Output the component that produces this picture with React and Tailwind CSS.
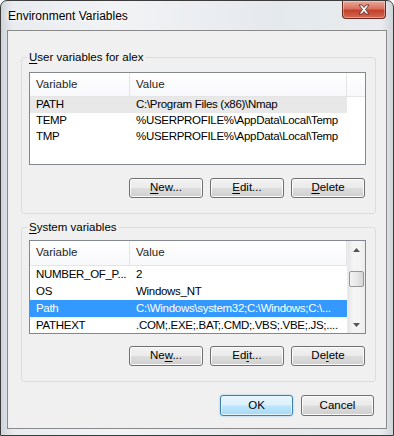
import React from 'react';

// Win7-style push button
const Btn = ({ children, className = '', h = 'h-[20px]', w = 'w-[74px]' }) => (
  <button
    className={`${h} ${w} rounded-[3px] border border-[#707070] bg-[linear-gradient(#f2f2f2_0%,#ebebeb_48%,#dddddd_52%,#cfcfcf_100%)] shadow-[inset_0_0_0_1px_#fbfbfb] text-black leading-none ${className}`}
  >
    {children}
  </button>
);

const U = ({ children }) => <span className="underline underline-offset-2">{children}</span>;

const Group = ({ label, children, className = '' }) => (
  <div className={`relative border border-[#d5dfe5] rounded-[3px] ${className}`}>
    <span className="absolute left-[5px] -top-[8px] bg-[#f0f0f0] px-[2px] leading-[15px]">{label}</span>
    {children}
  </div>
);

const Header = ({ h }) => (
  <div className={`flex ${h} bg-[linear-gradient(#ffffff,#f7f8fa)] border-b border-[#e5e5e5] text-[#1e1e1e]`}>
    <div className="w-[100px] border-r border-[#e5e5e5] pl-[6px] flex items-center">Variable</div>
    <div className="w-[217px] border-r border-[#e5e5e5] pl-[6px] flex items-center">Value</div>
  </div>
);

const Row = ({ name, value, h, sel }) => {
  const bg = sel === 'blue' ? 'bg-[#3399ff] text-white' : sel === 'gray' ? 'bg-[#e8e8e8]' : '';
  return (
    <div className={`flex w-[317px] ${h} items-center whitespace-nowrap tracking-[-0.3px] ${bg}`}>
      <div className="w-[100px] pl-[6px] overflow-hidden">{name}</div>
      <div className="w-[217px] pl-[6px] overflow-hidden">{value}</div>
    </div>
  );
};

const userVars = [
  ['PATH', 'C:\\Program Files (x86)\\Nmap', 'gray'],
  ['TEMP', '%USERPROFILE%\\AppData\\Local\\Temp'],
  ['TMP', '%USERPROFILE%\\AppData\\Local\\Temp'],
];

const sysVars = [
  ['NUMBER_OF_P...', '2'],
  ['OS', 'Windows_NT'],
  ['Path', 'C:\\Windows\\system32;C:\\Windows;C:\\...', 'blue'],
  ['PATHEXT', '.COM;.EXE;.BAT;.CMD;.VBS;.VBE;.JS;....'],
];

export default function App() {
  return (
    <div
      className="w-[394px] h-[436px] flex flex-col border border-[#3c3c3c] rounded-t-[7px] bg-[linear-gradient(90deg,#cfd4d9_0%,#e9ecef_3%,#f1f3f5_30%,#e6e9ec_70%,#e9ecef_97%,#cfd4d9_100%)] text-[11.5px] text-black"
      style={{ fontFamily: '"Liberation Sans", Arial, sans-serif' }}
    >
      {/* title bar */}
      <div className="h-[29px] flex items-start justify-between pl-[7px] pr-[7px] shrink-0">
        <span className="mt-[8px] text-[12px] leading-[14px] [text-shadow:0_0_8px_#ffffff,0_0_4px_#ffffff]">
          Environment Variables
        </span>
        <div className="w-[44px] h-[18px] rounded-b-[4px] border border-t-0 border-[#6b2a22] bg-[linear-gradient(#e9a99a_0%,#d8705e_45%,#c4412b_55%,#d26a52_100%)] shadow-[inset_0_0_0_1px_rgba(255,255,255,0.35)] flex items-center justify-center">
          <svg width="14" height="11" viewBox="0 0 14 11">
            <path
              d="M2 1h3l2 2.5L9 1h3L8.5 5.5 12 10H9L7 7.5 5 10H2l3.5-4.5z"
              fill="#ffffff"
              stroke="#4a2520"
              strokeWidth="0.8"
              strokeLinejoin="round"
            />
          </svg>
        </div>
      </div>

      {/* client area */}
      <div className="mx-[6px] mb-[6px] flex-1 border border-[#8a8a8a] bg-[#f0f0f0] flex flex-col px-[13px]">
        <Group label={<><U>U</U>ser variables for alex</>} className="mt-[26px] w-[355px] pl-[7px] pt-[14px] pb-[15px]">
          <div className="w-[337px] h-[93px] border border-[#828790] bg-white overflow-hidden">
            <Header h="h-[24px]" />
            {userVars.map(([n, v, s]) => (
              <Row key={n} name={n} value={v} sel={s} h="h-[16px]" />
            ))}
          </div>
          <div className="flex justify-end gap-[7px] mt-[13px] mr-[10px]">
            <Btn><U>N</U>ew...</Btn>
            <Btn><U>E</U>dit...</Btn>
            <Btn><U>D</U>elete</Btn>
          </div>
        </Group>

        <Group label={<><U>S</U>ystem variables</>} className="mt-[13px] w-[355px] pl-[7px] pt-[12px] pb-[15px]">
          <div className="w-[337px] h-[94px] border border-[#828790] bg-white overflow-hidden flex">
            <div className="w-[317px]">
              <Header h="h-[25px]" />
              {sysVars.map(([n, v, s]) => (
                <Row key={n} name={n} value={v} sel={s} h="h-[17px]" />
              ))}
            </div>
            {/* scrollbar */}
            <div className="flex-1 flex flex-col items-center bg-[linear-gradient(90deg,#e6e6e6,#f4f4f4_30%,#f4f4f4_70%,#ececec)] border-l border-[#ececec]">
              <div className="h-[17px] w-full flex items-center justify-center">
                <svg width="7" height="4" viewBox="0 0 7 4"><path d="M0 4L3.5 0 7 4z" fill="#555" /></svg>
              </div>
              <div className="mt-[13px] w-[15px] h-[16px] rounded-[2px] border border-[#979797] bg-[linear-gradient(90deg,#f3f3f3,#e8e8e8_50%,#d6d6d6)]" />
              <div className="flex-1" />
              <div className="h-[17px] w-full flex items-center justify-center">
                <svg width="7" height="4" viewBox="0 0 7 4"><path d="M0 0L3.5 4 7 0z" fill="#555" /></svg>
              </div>
            </div>
          </div>
          <div className="flex justify-end gap-[7px] mt-[12px] mr-[10px]">
            <Btn>Ne<U>w</U>...</Btn>
            <Btn>Ed<U>i</U>t...</Btn>
            <Btn>De<U>l</U>ete</Btn>
          </div>
        </Group>

        <div className="flex justify-end gap-[8px] mt-[13px] mr-[-1px]">
          <button className="h-[21px] w-[73px] rounded-[3px] border border-[#3c7fb1] bg-[linear-gradient(#eaf6fd_0%,#d9f0fc_48%,#bee6fd_52%,#a7d9f5_100%)] shadow-[inset_0_0_0_1px_#e6f4fc,0_0_2px_#79c4f0] leading-none">
            OK
          </button>
          <Btn h="h-[21px]" w="w-[73px]">Cancel</Btn>
        </div>
      </div>
    </div>
  );
}
